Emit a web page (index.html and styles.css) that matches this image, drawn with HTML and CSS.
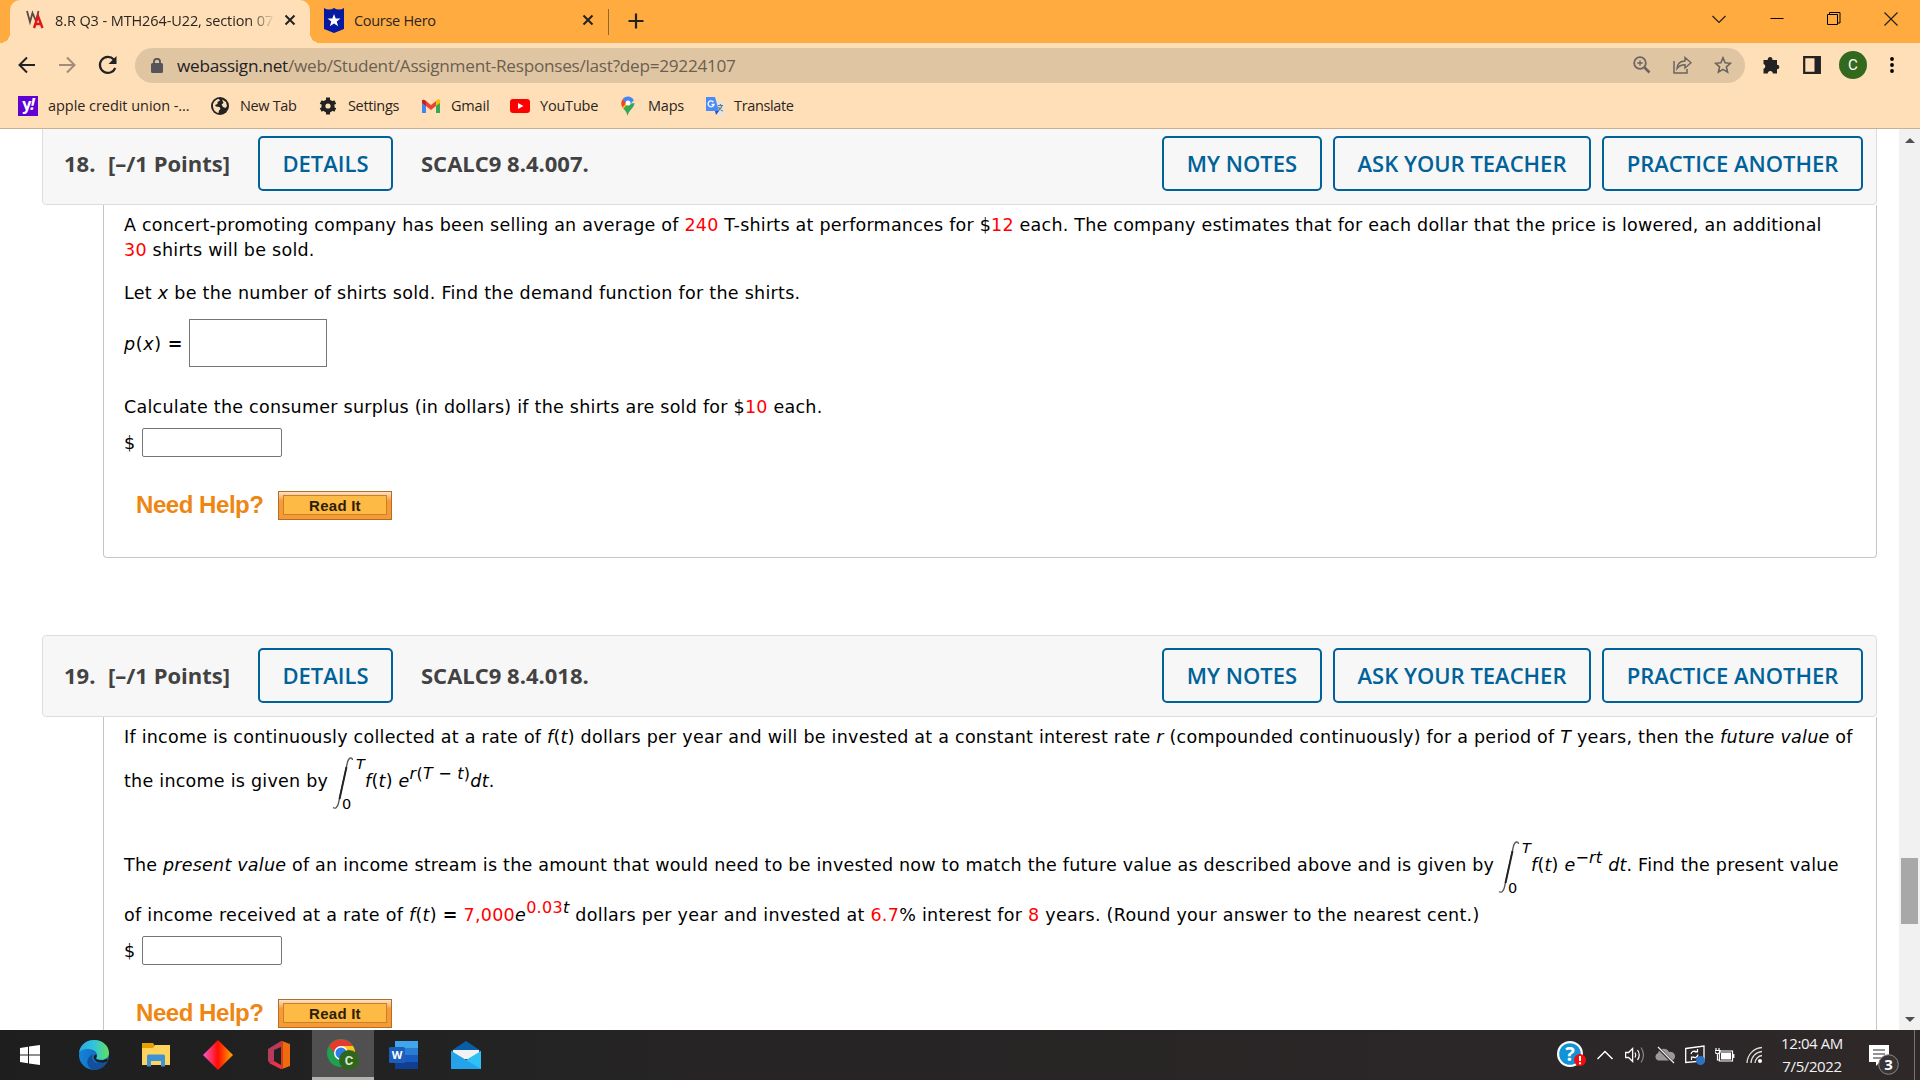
FILE: index.html
```
<!DOCTYPE html>
<html lang="en">
<head>
    <meta charset="UTF-8">
    <meta name="viewport" content="width=device-width, initial-scale=1.0">
    <title>8.R Q3 - MTH264-U22, section 07</title>
    <link rel="stylesheet" href="styles.css">
</head>
<body>
    <div class="tab-strip">
        <div class="tab active">
            <svg class="favicon" width="19" height="22" viewBox="0 0 19 22">
                <path d="M1 2l3 11 2.500-9 3.500 8 2.500-10" fill="none" stroke="#5a4a46" stroke-width="1.800"/>
                <path d="M8 19l4-12 4.500 12M9.500 15h6" fill="none" stroke="#e01515" stroke-width="2.400"/>
            </svg>
            <span class="tab-title fade">8.R Q3 - MTH264-U22, section 07</span>
            <svg class="close" width="12" height="12" viewBox="0 0 12 12"><path d="M1.500 1.500l9 9M10.500 1.500l-9 9" stroke="#222" stroke-width="2"/></svg>
        </div>
        <div class="tab">
            <svg class="favicon" width="20" height="25" viewBox="0 0 20 25">
                <path d="M0 0q5 3 10 0q5 3 10 0v21l-10 4-10-4z" fill="#0619a0"/>
                <path d="M10 6l1.700 4.500h4.800l-3.800 3 1.400 4.800-4.100-2.800-4.100 2.800 1.400-4.800-3.800-3h4.800z" fill="#fff"/>
            </svg>
            <span class="tab-title">Course Hero</span>
            <svg class="close" width="12" height="12" viewBox="0 0 12 12"><path d="M1.500 1.500l9 9M10.500 1.500l-9 9" stroke="#222" stroke-width="2"/></svg>
        </div>
        <svg class="new-tab" width="16" height="16" viewBox="0 0 16 16"><path d="M8 0.500v15M0.500 8h15" stroke="#222" stroke-width="2.200"/></svg>
        <div class="window-controls">
            <svg width="16" height="14" viewBox="0 0 16 14"><path d="M1.500 4l6.500 6.500 6.500-6.500" fill="none" stroke="#222" stroke-width="1.200"/></svg>
            <svg width="14" height="14" viewBox="0 0 14 14"><path d="M0.500 6.500h13" stroke="#000"/></svg>
            <svg width="14" height="14" viewBox="0 0 14 14"><path d="M0.500 2.500h10v10h-10zM2.500 2.500v-2h10.500v10.500h-2.500" fill="none" stroke="#000"/></svg>
            <svg width="14" height="14" viewBox="0 0 14 14"><path d="M0.500 0.500l13 13M13.500 0.500l-13 13" stroke="#222" stroke-width="1.200"/></svg>
        </div>
    </div>

    <div class="toolbar">
        <div class="nav-buttons">
            <svg width="18" height="18" viewBox="0 0 18 18"><path d="M17 9H2M9 1.500L1.500 9 9 16.500" fill="none" stroke="#222" stroke-width="2"/></svg>
            <svg width="18" height="18" viewBox="0 0 18 18"><path d="M1 9h15M9 1.500L16.500 9 9 16.500" fill="none" stroke="#a08c78" stroke-width="2"/></svg>
            <svg width="20" height="20" viewBox="0 0 20 20"><path d="M17.300 13A8 8 0 1 1 15.800 4.500L17 6" fill="none" stroke="#222" stroke-width="2.200"/><path d="M18.500 1v8h-8z" fill="#222"/></svg>
        </div>
        <div class="address-bar">
            <svg class="lock" width="12" height="15" viewBox="0 0 12 15"><rect y="5" width="12" height="10" rx="1.500" fill="#555459"/><path d="M3 6V3.800a3 3 0 0 1 6 0V6" fill="none" stroke="#555459" stroke-width="1.800"/></svg>
            <span class="url">webassign.net<span class="path">/web/Student/Assignment-Responses/last?dep=29224107</span></span>
            <div class="address-icons">
                <svg width="18" height="18" viewBox="0 0 18 18"><circle cx="7" cy="7" r="5.800" fill="none" stroke="#6a6460" stroke-width="1.800"/><path d="M11.500 11.500l5 5" stroke="#6a6460" stroke-width="2.500"/><path d="M4.300 7h5.400M7 4.300v5.400" stroke="#6a6460" stroke-width="1.300"/></svg>
                <svg width="19" height="18" viewBox="0 0 19 18"><path d="M1 5v12h13v-4" fill="none" stroke="#6a6460" stroke-width="1.500"/><path d="M4 12.500c.5-5 3.500-7.500 8-7.500V1.500L18 6.800 12 12V8.700c-3.500 0-6 1-8 3.800z" fill="none" stroke="#6a6460" stroke-width="1.400"/></svg>
                <svg width="18" height="18" viewBox="0 0 18 18"><path d="M9 1.800l2.100 5 5.400.5-4.100 3.600 1.200 5.300L9 13.400l-4.600 2.800 1.200-5.300-4.100-3.600 5.400-.5z" fill="none" stroke="#6a6460" stroke-width="1.600"/></svg>
            </div>
        </div>
        <div class="toolbar-icons">
            <svg width="18" height="18" viewBox="0 0 18 18"><path d="M.5 4h4.300a2.400 2.400 0 1 1 4.600 0H14v4.700a2.300 2.300 0 1 1 0 4.600V17.500H9.800a2.500 2.500 0 0 0-5 0H.5v-4.700a2.500 2.500 0 0 0 0-4.800z" fill="#222"/></svg>
            <svg width="18" height="18" viewBox="0 0 18 18"><path d="M1.200 1.200h15.600v15.600H1.200z" fill="none" stroke="#222" stroke-width="2.200"/><path d="M11.500 1h6v16h-6z" fill="#222"/></svg>
            <span class="avatar">C</span>
            <svg width="4" height="16" viewBox="0 0 4 16"><circle cx="2" cy="2" r="1.900"/><circle cx="2" cy="8" r="1.900"/><circle cx="2" cy="14" r="1.900"/></svg>
        </div>
    </div>

    <div class="bookmarks">
        <div class="bookmark wide"><span class="yahoo">y<i>!</i></span>apple credit union -...</div>
        <div class="bookmark">
            <svg width="20" height="20" viewBox="0 0 20 20"><circle cx="9" cy="10" r="9" fill="#222"/><path d="M2 8c1-3 3.500-5 6-5l1 1.500-2.500 1.500v2l-2.500 1 1 1.500 3.500.5 1 2-1.500 1.500-.5 2.500c-3.500-.5-6-4-5.500-9zM11 3.500l4 2.500 1 4-1.500 2-2.500-1-1.500-2.500 2-1.500z" fill="#ffdfb8"/></svg>New Tab
        </div>
        <div class="bookmark">
            <svg width="20" height="20" viewBox="0 0 20 20"><circle cx="9" cy="10" r="4.600" fill="none" stroke="#222" stroke-width="4"/><path d="M9 1.500v3M9 15.500v3M1.700 6l2.500 1.300M13.800 12.700l2.500 1.300M1.700 14l2.500-1.300M13.800 7.300l2.500-1.300" stroke="#222" stroke-width="4"/></svg>Settings
        </div>
        <div class="bookmark wide">
            <svg width="20" height="20" viewBox="0 0 20 20"><path d="M1 5v12h4V8z" fill="#4285f4"/><path d="M15 8v9h4V5z" fill="#34a853"/><path d="M15 5v5l4-3V5c0-2-2-2.500-4 0z" fill="#fbbc04"/><path d="M1 5v2l4 3V5C3 3 1 3.500 1 5z" fill="#c5221f"/><path d="M5 5l5 4 5-4v5l-5 4-5-4z" fill="#ea4335"/></svg>Gmail
        </div>
        <div class="bookmark wide">
            <svg width="20" height="20" viewBox="0 0 20 20"><rect y="3" width="20" height="14" rx="3" fill="#f00"/><path d="M8 7l5.500 3L8 13z" fill="#fff"/></svg>YouTube
        </div>
        <div class="bookmark wide">
            <svg width="20" height="20" viewBox="0 0 20 20"><path d="M3.500 9c1 4 5 5 6 11 1-6 7-8 7-13z" fill="#34a853"/><path d="M3.300 7c0 2 .5 4 2.200 5.500L14 4 10 3z" fill="#fbbc04"/><path d="M3.300 7q0-2 1.500-4l4 3.300-4.300 5Q3.300 9 3.300 7z" fill="#ea4335"/><path d="M4.800 2.800a6.700 6.700 0 0 1 11 1.400L10.500 10z" fill="#4285f4"/><circle cx="10" cy="7" r="2.500" fill="#fff"/></svg>Maps
        </div>
        <div class="bookmark">
            <svg width="20" height="20" viewBox="0 0 20 20"><path d="M8 6h11v13h-8z" fill="#e3e3e3"/><path d="M1 1h9l4 14H1z" fill="#4c8bf5"/><path d="M10 15h4l-3 4z" fill="#2a50c8"/><path d="M13 9.500h5M15.500 8v1.500M17 9.500q-1 4-4 5.500M13.500 11q1.500 3 4.500 4" fill="none" stroke="#607d8b" stroke-width="1.200"/><path d="M8.500 6A3 3 0 1 0 9 8.500H6.500" fill="none" stroke="#fff" stroke-width="1.300"/></svg>Translate
        </div>
    </div>

    <div class="viewport">
        <div class="page">
            <div class="question first">
                <div class="question-header">
                    <span class="number">18.</span>
                    <span class="points">[–/1 Points]</span>
                    <a class="btn details">DETAILS</a>
                    <span class="code">SCALC9 8.4.007.</span>
                    <div class="actions">
                        <a class="btn notes">MY NOTES</a>
                        <a class="btn ask">ASK YOUR TEACHER</a>
                        <a class="btn practice">PRACTICE ANOTHER</a>
                    </div>
                </div>
                <div class="question-body">
                    <div class="line concert">A concert-promoting company has been selling an average of <b>240</b> T-shirts at performances for $<b>12</b> each. The company estimates that for each dollar that the price is lowered, an additional</div>
                    <div class="line"><b>30</b> shirts will be sold.</div>
                    <div class="line demand">Let <i>x</i> be the number of shirts sold. Find the demand function for the shirts.</div>
                    <div class="answer formula"><span><i>p</i>(<i>x</i>) <strong>=</strong></span><span class="math-box"></span></div>
                    <div class="line surplus">Calculate the consumer surplus (in dollars) if the shirts are sold for $<b>10</b> each.</div>
                    <div class="answer dollars"><span>$</span><input type="text"></div>
                    <div class="help"><span class="need-help">Need Help?</span><span class="read-it"><span>Read It</span></span></div>
                </div>
            </div>

            <div class="question">
                <div class="question-header">
                    <span class="number">19.</span>
                    <span class="points">[–/1 Points]</span>
                    <a class="btn details">DETAILS</a>
                    <span class="code">SCALC9 8.4.018.</span>
                    <div class="actions">
                        <a class="btn notes">MY NOTES</a>
                        <a class="btn ask">ASK YOUR TEACHER</a>
                        <a class="btn practice">PRACTICE ANOTHER</a>
                    </div>
                </div>
                <div class="question-body">
                    <div class="line">If income is continuously collected at a rate of <i>f</i>(<i>t</i>) dollars per year and will be invested at a constant interest rate <i>r</i> (compounded continuously) for a period of <i>T</i> years, then the <i>future value</i> of</div>
                    <div class="line tall">the income is given by
                        <svg class="integral" width="34" height="60" viewBox="0 0 34 60"><path d="M20.500 4C20 1 17 1 15.500 6L6.500 47C5.500 52 3 53 1 51.500" fill="none" stroke="#555" stroke-width="1.300"/><path d="M14.500 11L7.500 43" stroke="#222" stroke-width="1.900"/><text x="24" y="13" class="upper">T</text><text x="10" y="53">0</text></svg><i>f</i>(<i>t</i>) <i>e</i><sup><i>r</i>(<i>T</i> − <i>t</i>)</sup><i>dt</i>.</div>
                    <div class="line tall present">The <i>present value</i> of an income stream is the amount that would need to be invested now to match the future value as described above and is given by
                        <svg class="integral" width="34" height="60" viewBox="0 0 34 60"><path d="M20.500 4C20 1 17 1 15.500 6L6.500 47C5.500 52 3 53 1 51.500" fill="none" stroke="#555" stroke-width="1.300"/><path d="M14.500 11L7.500 43" stroke="#222" stroke-width="1.900"/><text x="24" y="13" class="upper">T</text><text x="10" y="53">0</text></svg><i>f</i>(<i>t</i>) <i>e</i><sup>−<i>rt</i></sup> <i>dt</i>. Find the present value</div>
                    <div class="line received">of income received at a rate of <i>f</i>(<i>t</i>) <strong>=</strong> <b>7,000</b><i>e</i><sup><b>0.03</b><i>t</i></sup> dollars per year and invested at <b>6.7</b>% interest for <b>8</b> years. (Round your answer to the nearest cent.)</div>
                    <div class="answer dollars"><span>$</span><input type="text"></div>
                    <div class="help"><span class="need-help">Need Help?</span><span class="read-it"><span>Read It</span></span></div>
                </div>
            </div>
        </div>
        <div class="scrollbar">
            <span class="arrow up"></span>
            <span class="thumb"></span>
            <span class="arrow down"></span>
        </div>
    </div>

    <div class="taskbar">
        <div class="task start"><svg width="20" height="20" viewBox="0 0 20 20"><path d="M0 3l8-1.200v7.700H0zM9 1.600L20 0v9.500H9zM0 10.500h8v7.700L0 17zM9 10.500h11V20L9 18.400z" fill="#fff"/></svg></div>
        <div class="task">
            <svg width="30" height="30" viewBox="0 0 30 30">
                <defs>
                    <linearGradient id="edgeTop" x1="0" x2="1"><stop offset="0" stop-color="#2aa9e0"/><stop offset=".5" stop-color="#33c4dc"/><stop offset="1" stop-color="#62e05b"/></linearGradient>
                    <linearGradient id="edgeLeft" x1="0" x2="1"><stop offset="0" stop-color="#1683d8"/><stop offset="1" stop-color="#0c64b8"/></linearGradient>
                </defs>
                <circle cx="15" cy="15" r="15" fill="url(#edgeLeft)"/>
                <path d="M14 14c-3 6 2 12 14 8-3 5-8 8-13 8-7-2-10-11-1-16z" fill="#124f9c"/>
                <path d="M0 13C1 4 8 0 15 0c9 0 15 6 15 13 0 6-6 8-12 6-2-1 0-2 0-4 0-4-5-6-9-6-5 0-8 2-9 4z" fill="url(#edgeTop)"/>
                <path d="M18 15.500c0 2-2 3 0 4 3 1.500 7 1 9.500-1L29 21c-5 3-12 2-14-2-1-3 1-6 3-3.500z" fill="#1e1e1e"/>
            </svg>
        </div>
        <div class="task"><svg width="28" height="24" viewBox="0 0 28 24"><path d="M0 0h11l2 3-2 4H0z" fill="#e5a100"/><path d="M0 5h11l2-3h15v20H0z" fill="#ffd45c"/><path d="M5 13q0-1.500 1.500-1.500h15q1.500 0 1.500 1.500v10.500h-4V18H9v5.500H5z" fill="#3d93d6"/></svg></div>
        <div class="task">
            <svg width="30" height="30" viewBox="0 0 30 30">
                <defs><linearGradient id="diamond" x1="0" x2="1"><stop offset="0" stop-color="#f95ad0"/><stop offset=".5" stop-color="#ff0d00"/><stop offset="1" stop-color="#ffab00"/></linearGradient></defs>
                <path d="M15 0l15 15-15 15L0 15z" fill="url(#diamond)"/>
            </svg>
        </div>
        <div class="task office"><svg width="22" height="28" viewBox="0 0 22 28"><path d="M0 8L13 0v6L6 9v11l-4 2-2-2z" fill="#b83a5c"/><path d="M14 0l8 3v22l-8 3z" fill="#f06a10"/><path d="M13 0l2 .5v27l-2 .5-9-5 9 1z" fill="#d83b1a"/><path d="M1 22l5-2 7 4v4z" fill="#e8344a"/></svg></div>
        <div class="task current">
            <svg width="32" height="32" viewBox="0 0 32 32">
                <circle cx="14" cy="14" r="14" fill="#1fa050"/>
                <path d="M2 7a14 14 0 0 1 24 0H14a7 7 0 0 0-6 8z" fill="#e33b2e"/>
                <path d="M26 7a14 14 0 0 1-6 20l-6-6 7-10-7-4z" fill="#fcc31e"/>
                <circle cx="14" cy="14" r="7" fill="#fff"/><circle cx="14" cy="14" r="5.500" fill="#2b7de9"/>
                <circle cx="22" cy="21" r="10" fill="#2f661c"/>
                <text x="22" y="26" class="badge-letter">C</text>
            </svg>
        </div>
        <div class="task word"><svg width="29" height="28" viewBox="0 0 29 28"><path d="M6 0h23v7H6z" fill="#41a5ee"/><path d="M6 7h23v7H6z" fill="#2b7cd3"/><path d="M6 14h23v7H6z" fill="#185abd"/><path d="M6 21h23v7H6z" fill="#103f91"/><rect y="6" width="16" height="16" rx="1.500" fill="#1b5ebe"/><text x="8" y="18" class="word-letter">W</text></svg></div>
        <div class="task"><svg width="30" height="28" viewBox="0 0 30 28"><path d="M0 10L15 0l15 10v6H0z" fill="#0a5ea8"/><path d="M2 9h26v9H2z" fill="#f2f2f2"/><path d="M0 10l15 9 15-9v18H0z" fill="#2fc1f5"/><path d="M0 28h30L15 19l-15-9z" fill="#25a3ea"/></svg></div>

        <div class="tray">
            <div class="tray-item help-icon"><svg width="30" height="30" viewBox="0 0 30 30"><circle cx="13" cy="14" r="13" fill="#fff"/><circle cx="13" cy="14" r="10.800" fill="#1193d8"/><text x="13" y="21" class="question-mark">?</text><circle cx="23" cy="20" r="6" fill="#f20d0d"/><path d="M23 16v5M23 22.300v2" stroke="#fff" stroke-width="2"/></svg></div>
            <div class="tray-item"><svg width="18" height="12" viewBox="0 0 18 12"><path d="M1.500 10l7.500-7.500 7.500 7.500" fill="none" stroke="#fff" stroke-width="1.500"/></svg></div>
            <div class="tray-item"><svg width="20" height="18" viewBox="0 0 20 18"><path d="M.6 6.500h3l4-4v13l-4-4h-3z" fill="none" stroke="#fff" stroke-width="1.300"/><path d="M10 6.500q1.500 2.500 0 5M12.500 4q3.500 5 0 10" fill="none" stroke="#fff" stroke-width="1.200"/><path d="M16 1.500q5 7.500 0 15" fill="none" stroke="#888" stroke-width="1.200"/></svg></div>
            <div class="tray-item"><svg width="20" height="18" viewBox="0 0 20 18"><path d="M3 14.500a4 4 0 0 1 0-7.500 6 6 0 0 1 11-1 4.500 4.500 0 0 1 3 8.500z" fill="#999"/><path d="M2.500 1l16 16" stroke="#2e2829" stroke-width="3"/><path d="M3 1l16 16" stroke="#eee" stroke-width="1.200"/></svg></div>
            <div class="tray-item"><svg width="20" height="20" viewBox="0 0 20 20"><path d="M.7 3.500L19 1v15L.7 17.500z" fill="none" stroke="#fff" stroke-width="1.300"/><path d="M6 9q1-4 6-2.500M12.500 4v3h-3M13 9.500q-1 4.500-6 2.500M6.500 15v-3h3" fill="none" stroke="#fff" stroke-width="1.200"/><circle cx="15.500" cy="15.500" r="4.500" fill="#2d73c5"/></svg></div>
            <div class="tray-item"><svg width="20" height="14" viewBox="0 0 20 14"><path d="M4.500 3h13v10h-13z" fill="none" stroke="#fff" stroke-width="1.200"/><path d="M6 4.500h10v7H6z" fill="#fff"/><path d="M18.500 6v4" stroke="#fff" stroke-width="1.800"/><path d="M1 0v2M4 0v2M0 2.500h5v2l-2.500 1.500L0 4.500zM2.500 6v6h2" fill="none" stroke="#fff" stroke-width="1.200"/></svg></div>
            <div class="tray-item"><svg width="18" height="18" viewBox="0 0 18 18"><path d="M1 17A16 16 0 0 1 16 1.500M5 17A12 12 0 0 1 16 5.500M9 17a8 8 0 0 1 7-7.500" fill="none" stroke="#ddd" stroke-width="1.300"/><circle cx="14" cy="15" r="2" fill="#fff"/></svg></div>
            <div class="clock"><div>12:04 AM</div><div>7/5/2022</div></div>
            <div class="notifications"><svg width="30" height="32" viewBox="0 0 30 32"><path d="M0 1h20v17h-9l-4 4v-4H0z" fill="#fff"/><path d="M4 6h12M4 10h12M4 14h8" stroke="#2e2829" stroke-width="1.200"/><circle cx="19.500" cy="20.500" r="9.800" fill="#383334" stroke="#8b8889" stroke-width="1"/><text x="19.500" y="26" class="count">3</text></svg></div>
        </div>
    </div>
</body>
</html>
```
FILE: styles.css
```
* {
    box-sizing: border-box;
}

body {
    margin: 0;
    width: 1920px;
    height: 1080px;
    overflow: hidden;
    background-color: #ffffff;
    font-family: "Open Sans", "Noto Sans", sans-serif;
}

svg {
    flex: none;
}

/* Browser chrome */
.tab-strip {
    display: flex;
    height: 43px;
    padding-left: 10px;
    background-color: #ffab40;
}

.tab {
    display: flex;
    align-items: center;
    width: 299px;
    padding: 0 14px 3px;
    font-size: 14.5px;
    color: #2b2521;
    white-space: nowrap;
}

.tab.active {
    position: relative;
    width: 300px;
    padding-left: 16px;
    background-color: #ffdfb8;
    border-radius: 10px 10px 0 0;
}

.tab.active::before,
.tab.active::after {
    content: "";
    position: absolute;
    bottom: 0;
    width: 10px;
    height: 10px;
}

.tab.active::before {
    left: -10px;
    background: radial-gradient(circle at 0 0, transparent 10px, #ffdfb8 10px);
}

.tab.active::after {
    right: -10px;
    background: radial-gradient(circle at 100% 0, transparent 10px, #ffdfb8 10px);
}

.tab-title {
    flex: 1;
    margin-left: 10px;
    overflow: hidden;
    letter-spacing: -0.3px;
}

.tab-title.fade {
    margin-right: 9px;
    letter-spacing: -0.1px;
    -webkit-mask-image: linear-gradient(to right, #000 88%, transparent);
    mask-image: linear-gradient(to right, #000 88%, transparent);
}

.new-tab {
    margin: 13px 0 0 19px;
}

.tab:nth-child(2) {
    border-right: 1px solid transparent;
    border-image: linear-gradient(transparent 10px, #8d6738 10px, #8d6738 34px, transparent 34px) 1;
}

.window-controls {
    display: flex;
    gap: 43px;
    margin: 12px 22px 0 auto;
}

.toolbar {
    display: flex;
    align-items: center;
    height: 44px;
    background-color: #ffdfb8;
}

.nav-buttons {
    display: flex;
    align-items: center;
    gap: 22px;
    width: 135px;
    padding-left: 18px;
}

.address-bar {
    display: flex;
    align-items: center;
    width: 1610px;
    height: 35px;
    padding: 0 13px 0 16px;
    border-radius: 18px;
    background-color: #e0c5a2;
}

.url {
    margin-left: 14px;
    font-size: 17.2px;
    letter-spacing: -0.27px;
    color: #222222;
}

.path {
    color: #6b5f51;
}

.address-icons {
    display: flex;
    gap: 22px;
    margin-left: auto;
}

.toolbar-icons {
    display: flex;
    align-items: center;
    gap: 22px;
    padding-left: 18px;
}

.toolbar-icons .avatar {
    width: 28px;
    height: 28px;
    margin: 0 1px 0 -4px;
    border-radius: 50%;
    background-color: #33691e;
    color: #ffffff;
    font: 15px/28px Roboto, sans-serif;
    text-align: center;
}

.bookmarks {
    display: grid;
    grid-template-columns: 193px 108px 102px 89px 108px 87px auto;
    height: 42px;
    padding: 0 0 4px 18px;
    border-bottom: 1px solid #c9b092;
    background-color: #ffdfb8;
}

.bookmark {
    display: flex;
    align-items: center;
    gap: 9px;
    font-size: 14.5px;
    letter-spacing: -0.35px;
    color: #2b2521;
    white-space: nowrap;
}

.bookmark.wide {
    gap: 10px;
    letter-spacing: -0.2px;
}

.bookmark.wide:first-child {
    letter-spacing: -0.05px;
}

.yahoo {
    width: 20px;
    height: 20px;
    background-color: #6001d2;
    color: #ffffff;
    font: bold 16px/17px "Open Sans", sans-serif;
    letter-spacing: -1px;
    text-align: center;
}

/* Page */
.viewport {
    display: flex;
    height: 901px;
    overflow: hidden;
}

.page {
    width: 1899px;
    padding: 0 22px 0 42px;
}

.question {
    margin-bottom: 77px;
}

.question.first {
    margin-top: -6px;
}

.question-header {
    display: flex;
    align-items: center;
    height: 82px;
    padding: 0 13px 2px 21px;
    border: 1px solid #dddddd;
    border-radius: 4px;
    background-color: #f7f7f7;
    color: #424242;
    font-size: 22px;
    font-weight: 700;
    white-space: nowrap;
}

.number {
    width: 44px;
}

.points {
    width: 150px;
}

.code {
    margin-left: 28px;
}

.btn {
    height: 55px;
    border: 2px solid #006298;
    border-radius: 5px;
    color: #006298;
    font-size: 22px;
    font-weight: 600;
    line-height: 51px;
    text-align: center;
}

.details {
    width: 135px;
}

.actions {
    display: flex;
    gap: 11px;
    margin-left: auto;
}

.notes {
    width: 160px;
}

.ask {
    width: 258px;
}

.practice {
    width: 261px;
}

.question-body {
    height: 353px;
    margin-left: 61px;
    padding: 7px 0 0 20px;
    border: 1px solid #c6c6c6;
    border-top: none;
    border-radius: 0 0 4px 4px;
    color: #000000;
    font-family: "DejaVu Sans", sans-serif;
    font-size: 17.5px;
    letter-spacing: 0.25px;
}

.line {
    height: 25px;
    line-height: 27px;
    white-space: nowrap;
}

.line b,
.answer b {
    color: #ff0000;
    font-weight: normal;
}

.line sup {
    font-size: 16px;
    line-height: 0;
    vertical-align: 8px;
}

.concert {
    letter-spacing: 0.23px;
}

.demand {
    margin-top: 18px;
    letter-spacing: 0.28px;
}

.answer {
    display: flex;
    align-items: center;
}

.formula {
    height: 48px;
    margin-top: 14px;
}

.formula span:first-child {
    width: 65px;
    padding-top: 2px;
    letter-spacing: 0.6px;
}

.math-box {
    width: 138px;
    height: 48px;
    border: 1px solid #767676;
}

.surplus {
    margin-top: 27px;
}

.dollars {
    height: 29px;
    margin-top: 9px;
}

.dollars span {
    width: 18px;
}

.dollars input {
    width: 140px;
    height: 29px;
    border: 1px solid #767676;
    border-radius: 2px;
}

.help {
    display: flex;
    align-items: center;
    margin-top: 34px;
    padding-left: 12px;
}

.need-help {
    width: 142px;
    padding-bottom: 2px;
    color: #ee8611;
    font: bold 24px/27px "Liberation Sans", sans-serif;
    letter-spacing: -0.45px;
}

.read-it {
    width: 114px;
    height: 29px;
    padding: 3px 4px 4px;
    border: 1px solid #b06f27;
    background: linear-gradient(#fce3ca, #f79a35 9px);
}

.read-it span {
    display: block;
    height: 20px;
    border: 1px solid #c9812e;
    background-color: #fdba45;
    color: #2e1e05;
    font: bold 15px/20px "Liberation Sans", sans-serif;
    text-align: center;
}

.integral {
    margin: 0 -1px -8px -2px;
    vertical-align: middle;
    font-size: 14.5px;
    letter-spacing: 0;
}

.upper {
    font-style: italic;
}

.tall {
    height: 54px;
    margin-top: 6px;
    padding-top: 1px;
    line-height: 30px;
}

.present {
    margin-top: 30px;
    letter-spacing: 0.225px;
}

.received {
    margin-top: 9px;
    letter-spacing: 0.29px;
}

.scrollbar {
    display: flex;
    flex-direction: column;
    align-items: center;
    width: 21px;
    padding-top: 8px;
    background-color: #f1f1f1;
}

.arrow {
    border: 5px solid transparent;
}

.arrow.up {
    border-bottom-color: #505050;
    border-top: none;
    margin-top: 1px;
}

.arrow.down {
    border-top-color: #505050;
    border-bottom: none;
    margin-top: 93px;
}

.thumb {
    width: 17px;
    height: 66px;
    margin-top: 715px;
    background-color: #a8a8a8;
}

/* Taskbar */
.taskbar {
    display: flex;
    height: 50px;
    background: linear-gradient(to right, #1e1e1e, #242323 25%, #2e2829);
}

.task {
    display: flex;
    align-items: center;
    justify-content: center;
    width: 62px;
    padding-right: 2px;
}

.task.start {
    width: 64px;
    padding-right: 4px;
}

.task.office {
    padding-right: 4px;
}

.task.word {
    padding-right: 4px;
}

.task.current {
    padding: 3px 0 0;
    background-color: #505050;
    border-bottom: 3px solid #b5b3ad;
}

.badge-letter {
    fill: #d7e8cf;
    font: bold 13px Roboto, sans-serif;
    text-anchor: middle;
}

.word-letter {
    fill: #ffffff;
    font: bold 11px "Open Sans", sans-serif;
    text-anchor: middle;
}

.tray {
    display: flex;
    margin-left: auto;
    padding-right: 5px;
}

.tray-item {
    display: flex;
    align-items: center;
    justify-content: center;
    width: 30px;
}

.help-icon {
    width: 36px;
}

.question-mark {
    fill: #ffffff;
    font: bold 20px "Open Sans", sans-serif;
    text-anchor: middle;
}

.clock {
    width: 84px;
    padding-top: 2px;
    color: #f2f2f2;
    font-size: 15px;
    line-height: 23px;
    letter-spacing: -0.4px;
    text-align: center;
}

.notifications {
    width: 61px;
    padding: 14px 0 0 15px;
    border-right: 1px solid #777374;
}

.count {
    fill: #ffffff;
    font: bold 15px "Open Sans", sans-serif;
    text-anchor: middle;
}
```
